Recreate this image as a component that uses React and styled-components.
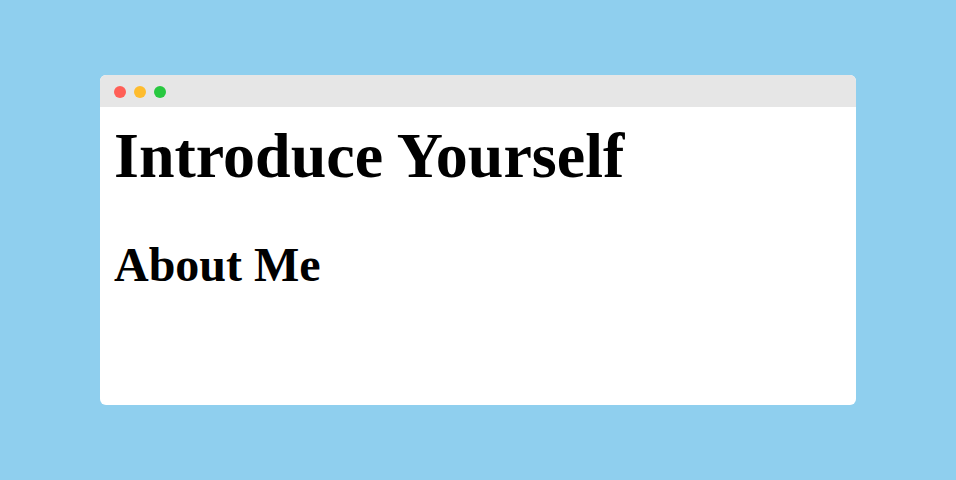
import React from "react";
import styled, { createGlobalStyle } from "styled-components";

const Global = createGlobalStyle`
  html, body { margin: 0; padding: 0; }
  body { background: #8fcfee; font-family: "Liberation Serif", "Times New Roman", serif; }
`;

const Page = styled.div`
  width: 956px;
  height: 480px;
  display: flex;
  align-items: flex-start;
  justify-content: center;
  padding-top: 75px;
  box-sizing: border-box;
`;

const Window = styled.div`
  width: 756px;
  height: 330px;
  background: #ffffff;
  border-radius: 6px;
  overflow: hidden;
  display: flex;
  flex-direction: column;
`;

const TitleBar = styled.div`
  height: 32px;
  box-sizing: border-box;
  padding-top: 2px;
  background: #e6e6e6;
  display: flex;
  align-items: center;
  gap: 8px;
  padding-left: 14px;
  flex-shrink: 0;
`;

const Dot = styled.span`
  width: 12px;
  height: 12px;
  border-radius: 50%;
  background: ${(p) => p.$color};
`;

const Content = styled.div`
  padding: 0 14px;
`;

const Title = styled.h1`
  font-size: 64px;
  font-weight: bold;
  margin: 12px 0 0;
  color: #000;
`;

const Subtitle = styled.h2`
  font-size: 48px;
  font-weight: bold;
  margin: 44px 0 0;
  color: #000;
`;

export default function App() {
  return (
    <>
      <Global />
      <Page>
        <Window>
          <TitleBar>
            <Dot $color="#ff5f57" />
            <Dot $color="#febc2e" />
            <Dot $color="#28c840" />
          </TitleBar>
          <Content>
            <Title>Introduce Yourself</Title>
            <Subtitle>About Me</Subtitle>
          </Content>
        </Window>
      </Page>
    </>
  );
}
